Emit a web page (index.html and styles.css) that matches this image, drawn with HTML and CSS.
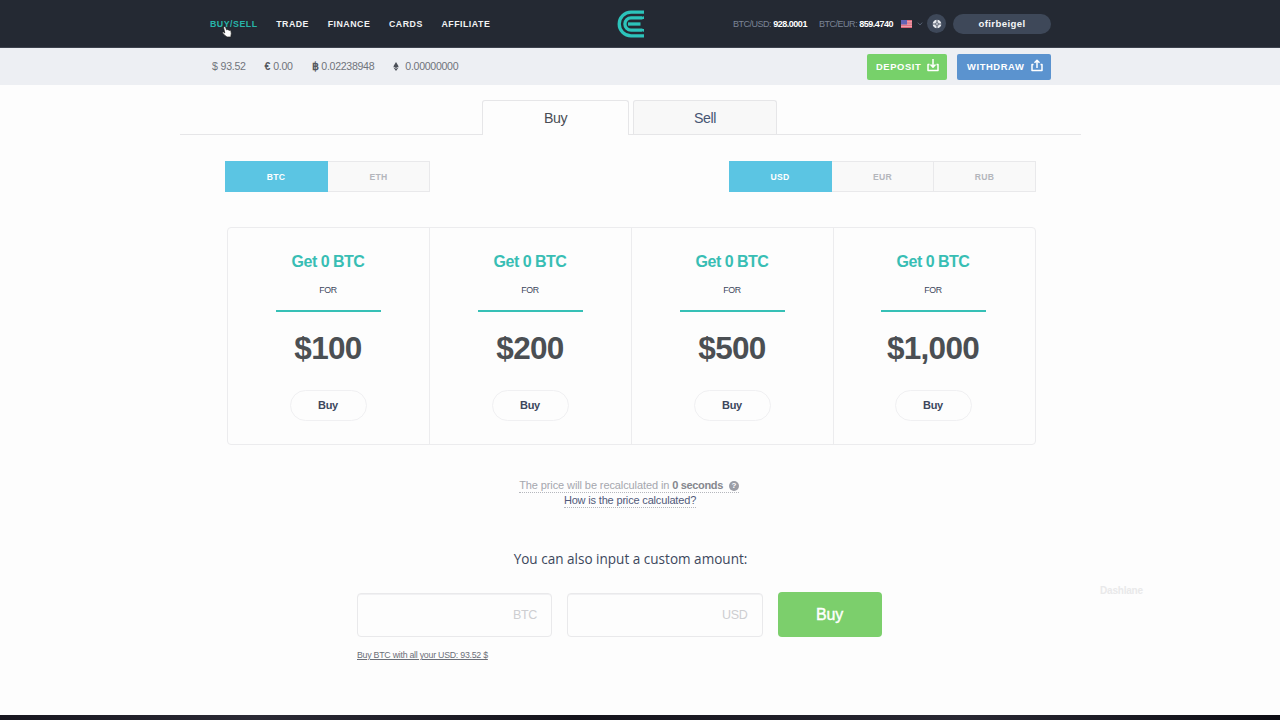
FILE: index.html
```html
<!DOCTYPE html>
<html lang="en">
<head>
    <meta charset="UTF-8">
    <meta name="viewport" content="width=device-width, initial-scale=1.0">
    <title>Buy Bitcoins</title>
    <link rel="stylesheet" href="styles.css">
</head>
<body>
    <!-- Top navigation -->
    <header class="topbar">
        <div class="container">
            <nav class="nav">
                <a class="active">BUY/SELL</a>
                <a>TRADE</a>
                <a>FINANCE</a>
                <a>CARDS</a>
                <a>AFFILIATE</a>
            </nav>
            <svg class="logo" width="28" height="28" viewBox="0 0 28 28" fill="none" stroke="#2cc4bb" stroke-width="3.3">
                <path d="M27 2.200H14a11.800 11.800 0 0 0 0 23.600h13"/>
                <path d="M25.500 7.900H14a6.100 6.100 0 0 0 0 12.200h11.500"/>
                <path d="M11 14h12.500"/>
                <path d="M22.500 9l4.500-3v3zM22.500 19l4.500 3v-3z" fill="#2cc4bb" stroke="none"/>
            </svg>
            <div class="account">
                <span class="rate">BTC/USD: <b>928.0001</b></span>
                <span class="rate">BTC/EUR: <b>859.4740</b></span>
                <svg class="flag" width="11" height="8" viewBox="0 0 11 8">
                    <rect width="11" height="8" fill="#eda0ab"/>
                    <path d="M0 .6h11M0 3h11M0 5.300h11M0 7.500h11" stroke="#dc6478" stroke-width="1"/>
                    <rect width="6" height="4.500" fill="#6263b5"/>
                </svg>
                <svg class="chevron" width="6" height="4" viewBox="0 0 6 4" fill="none" stroke="#566073"><path d="M.8.6L3 3 5.200.6"/></svg>
                <span class="help">
                    <svg width="10" height="10" viewBox="0 0 10 10" fill="none">
                        <circle cx="5" cy="5" r="3.100" stroke="#e9ebef" stroke-width="2.500"/>
                        <path d="M5 0v10M0 5h10" stroke="#3e4859" stroke-width=".9"/>
                        <path d="M5 3.500v3M3.500 5h3" stroke="#e9ebef" stroke-width=".8"/>
                    </svg>
                </span>
                <a class="user">ofirbeigel</a>
            </div>
        </div>
    </header>

    <!-- Balances -->
    <div class="balances">
        <div class="container">
            <span class="balance usd"><i>$</i>93.52</span>
            <span class="balance eur"><b>€</b>0.00</span>
            <span class="balance btc"><b>฿</b>0.02238948</span>
            <span class="balance eth">
                <svg width="6" height="9" viewBox="0 0 6 9" fill="#4c5058"><path d="M3 0l2.700 4.400L3 6 .3 4.400zM.3 5.200L3 6.800l2.700-1.600L3 9z"/></svg>0.00000000
            </span>
            <div class="actions">
                <a class="btn deposit">DEPOSIT
                    <svg width="12" height="13" viewBox="0 0 12 13" fill="none" stroke="#fff" stroke-width="1.500" stroke-linejoin="round"><path d="M2.500 5.500H1v6h10v-6H9.500M6 0v8M3.500 5.600L6 8.200l2.500-2.600"/></svg>
                </a>
                <a class="btn withdraw">WITHDRAW
                    <svg width="12" height="13" viewBox="0 0 12 13" fill="none" stroke="#fff" stroke-width="1.500" stroke-linejoin="round"><path d="M2.500 5.500H1v6h10v-6H9.500M6 9V1.200M3.500 3.800L6 1.200l2.500 2.600"/></svg>
                </a>
            </div>
        </div>
    </div>

    <main class="content">
        <div class="tabs">
            <a class="tab active">Buy</a>
            <a class="tab">Sell</a>
        </div>

        <div class="switches">
            <div class="switch">
                <a class="active">BTC</a>
                <a>ETH</a>
            </div>
            <div class="switch">
                <a class="active">USD</a>
                <a>EUR</a>
                <a>RUB</a>
            </div>
        </div>

        <!-- Fixed packages -->
        <div class="packages">
            <div class="package">
                <h3>Get 0 BTC</h3>
                <span class="for">FOR</span>
                <div class="price">$100</div>
                <a class="buy">Buy</a>
            </div>
            <div class="package">
                <h3>Get 0 BTC</h3>
                <span class="for">FOR</span>
                <div class="price">$200</div>
                <a class="buy">Buy</a>
            </div>
            <div class="package">
                <h3>Get 0 BTC</h3>
                <span class="for">FOR</span>
                <div class="price">$500</div>
                <a class="buy">Buy</a>
            </div>
            <div class="package">
                <h3>Get 0 BTC</h3>
                <span class="for">FOR</span>
                <div class="price">$1,000</div>
                <a class="buy">Buy</a>
            </div>
        </div>

        <div class="notes">
            <span class="recalc">The price will be recalculated in <b>0 seconds</b> <span class="question">?</span></span>
            <a class="how">How is the price calculated?</a>
        </div>

        <!-- Custom amount -->
        <h2>You can also input a custom amount:</h2>
        <form class="custom">
            <label class="field">BTC</label>
            <label class="field">USD</label>
            <button type="button">Buy</button>
        </form>
        <a class="all">Buy BTC with all your USD: 93.52 $</a>
    </main>

    <footer class="strip"></footer>

    <span class="ghost">Dashlane</span>
    <svg class="cursor" width="10" height="12" viewBox="0 0 10 12" fill="#fff" stroke="#222" stroke-width=".7"><path d="M2.200.7c.8-.4 1.300.1 1.500.8l.8 2.300c.8-.5 1.300-.2 1.500.2.700-.3 1.200 0 1.400.4.900-.2 1.400.3 1.600 1.100.4 1.700.4 2.600-.1 4.200l.1 1.300H5L2.600 9.200.6 7c-.4-.8.6-1.300 1.300-.7l.9.700L1.700 2c-.1-.6 0-1 .5-1.300z"/></svg>
</body>
</html>
```
FILE: styles.css
```css
* {
    box-sizing: border-box;
}
body {
    margin: 0;
    height: 720px;
    overflow: hidden;
    display: flex;
    flex-direction: column;
    background-color: #fdfdfd;
    color: #3c475c;
    font-family: "Liberation Sans", Arial, sans-serif;
}
.container {
    width: 841px;
    height: 100%;
    margin: 0 0 0 210px;
    display: flex;
    align-items: center;
}
.topbar {
    flex: none;
    height: 48px;
    background-color: #242933;
    border-bottom: 1px solid #3d424e;
}
.nav {
    width: 407px;
    display: flex;
    gap: 18.7px;
    font-size: 8.8px;
    font-weight: bold;
    letter-spacing: 0.5px;
    color: #f1f2f4;
}
.nav .active {
    color: #27b5aa;
}
.account {
    margin-left: auto;
    display: flex;
    align-items: center;
}
.rate {
    margin-right: 12px;
    font-size: 9px;
    letter-spacing: -0.47px;
    color: #7b8496;
}
.rate b {
    color: #fff;
}
.rate + .flag {
    margin-left: -4px;
}
.chevron {
    margin: 0 4px 0 5px;
}
.help {
    width: 19px;
    height: 19px;
    border-radius: 50%;
    background-color: #3e4859;
    display: flex;
    align-items: center;
    justify-content: center;
}
.user {
    width: 98px;
    height: 20px;
    margin-left: 7px;
    border-radius: 10px;
    background-color: #3e4859;
    color: #f4f5f7;
    font-size: 9.6px;
    font-weight: bold;
    letter-spacing: 0.4px;
    line-height: 20px;
    text-align: center;
}

.balances {
    flex: none;
    height: 37px;
    background-color: #edeff3;
    color: #70747b;
}
.balance {
    display: flex;
    align-items: center;
    gap: 3px;
    font-size: 10.6px;
    line-height: 12px;
    letter-spacing: -0.3px;
}
.balances .balance {
    padding-bottom: 1px;
}
.balance i {
    font-style: normal;
}
.balance b {
    color: #55585f;
}
.usd {
    margin-left: 2px;
}
.eur {
    margin-left: 19px;
}
.btc {
    margin-left: 19px;
}
.eth {
    margin-left: 19px;
    gap: 6px;
}
.actions {
    margin-left: auto;
    display: flex;
    gap: 10px;
}
.btn {
    height: 26px;
    padding-bottom: 1px;
    border-radius: 2px;
    display: flex;
    align-items: center;
    justify-content: space-between;
    color: #fff;
    font-size: 9.4px;
    font-weight: bold;
    letter-spacing: 0.6px;
}
.deposit {
    width: 80px;
    padding-left: 9px;
    padding-right: 8px;
    background-color: #77d16a;
}
.withdraw {
    width: 94px;
    padding-left: 10px;
    padding-right: 8px;
    background-color: #5b93cf;
}
.btn svg {
    margin-bottom: 2px;
}

.content {
    flex: 1;
    width: 901px;
    margin-left: 180px;
}
.tabs {
    height: 50px;
    padding: 15px 0 0 302px;
    display: flex;
    gap: 4px;
    border-bottom: 1px solid #e6e6e8;
}
.tab {
    width: 144px;
    height: 34px;
    border: 1px solid #e6e6e8;
    border-bottom: none;
    border-radius: 3px 3px 0 0;
    background-color: #f8f8f8;
    color: #465573;
    font-size: 14.2px;
    letter-spacing: -0.4px;
    line-height: 34px;
    text-align: center;
}
.tab.active {
    width: 147px;
    height: 35px;
    background-color: #fdfdfd;
    color: #4a4d55;
}
.switches {
    margin: 26px 45px 0;
    display: flex;
    justify-content: space-between;
}
.switch {
    display: flex;
}
.switch a {
    width: 102px;
    height: 31px;
    border: 1px solid #e9e9eb;
    border-left: none;
    background-color: #f9f9f9;
    color: #b4b6bc;
    font-size: 8.6px;
    font-weight: bold;
    letter-spacing: 0.3px;
    line-height: 30px;
    text-align: center;
}
.switch .active {
    width: 103px;
    border-color: #5bc5e3;
    background-color: #5bc5e3;
    color: #fff;
}
.packages {
    width: 809px;
    height: 218px;
    margin: 35px 0 0 47px;
    display: grid;
    grid-template-columns: 202px 202px 202px 1fr;
    border: 1px solid #ececee;
    border-radius: 4px;
}
.package {
    padding: 24px 1px 0 0;
    display: flex;
    flex-direction: column;
    align-items: center;
    border-right: 1px solid #ececee;
}
.package:last-child {
    padding-right: 3px;
    border-right: none;
}
.package h3 {
    margin: 0;
    color: #38beb4;
    font-size: 16px;
    letter-spacing: -0.5px;
    line-height: 20px;
}
.for {
    width: 105px;
    height: 32px;
    margin-top: 8px;
    border-bottom: 2px solid #36c0b6;
    font-size: 8.8px;
    letter-spacing: -0.3px;
    line-height: 21px;
    text-align: center;
}
.price {
    margin-top: 18px;
    color: #4b4f53;
    font-size: 31.5px;
    font-weight: bold;
    letter-spacing: -0.7px;
    line-height: 36px;
}
.package .buy {
    width: 77px;
    height: 31px;
    margin-top: 24px;
    border: 1px solid #f0f0f2;
    border-radius: 16px;
    font-size: 11px;
    font-weight: bold;
    letter-spacing: -0.3px;
    line-height: 29px;
    text-align: center;
}
.notes {
    width: 220px;
    margin: 33px 0 0 339px;
    display: flex;
    flex-direction: column;
    align-items: center;
    font-size: 11px;
    letter-spacing: -0.1px;
    line-height: 14px;
    white-space: nowrap;
}
.recalc {
    border-bottom: 1px dotted #b5b7bd;
    color: #a5a7ae;
}
.recalc b {
    color: #85878e;
    letter-spacing: -0.35px;
}
.question {
    display: inline-block;
    width: 10px;
    height: 10px;
    margin-left: 3px;
    border-radius: 50%;
    background-color: #9b9da5;
    color: #fff;
    font-size: 8px;
    font-weight: bold;
    line-height: 10px;
    text-align: center;
    vertical-align: 1px;
}
.how {
    margin: 0 0 0 2px;
    border-bottom: 1px dotted #b5b7bd;
    color: #50597a;
    letter-spacing: -0.17px;
}
h2 {
    margin: 41px 0 0;
    font-family: "Open Sans", sans-serif;
    font-size: 13.55px;
    font-weight: normal;
    line-height: 20px;
    text-align: center;
}
.custom {
    margin: 23px 0 0 176.5px;
    display: flex;
    align-items: center;
    gap: 15px;
}
.field {
    width: 195.5px;
    height: 44px;
    padding-right: 14px;
    border: 1px solid #e9e9eb;
    border-radius: 4px;
    box-shadow: inset 0 1px 0 #f1f1f3;
    color: #cdced1;
    font-size: 12.5px;
    letter-spacing: -0.3px;
    line-height: 42px;
    text-align: right;
}
.custom button {
    width: 104px;
    height: 45px;
    padding: 0;
    border: none;
    border-radius: 4px;
    background-color: #7ccf6c;
    color: #fff;
    font-family: inherit;
    font-size: 16px;
    letter-spacing: -0.2px;
    -webkit-text-stroke: 0.4px #fff;
}
.all {
    display: block;
    margin: 12px 0 0 177px;
    color: #6b6f78;
    font-size: 8.8px;
    letter-spacing: -0.25px;
    line-height: 12px;
    text-decoration: underline;
}
.strip {
    flex: none;
    height: 5px;
    background: linear-gradient(90deg, #17161f, #2b2a35 20%, #14131b 45%, #292833 75%, #0d0d14);
}
.ghost {
    position: absolute;
    left: 1100px;
    top: 585px;
    color: #e9e9ea;
    font-size: 10px;
    font-weight: bold;
    letter-spacing: -0.2px;
}
.cursor {
    position: absolute;
    left: 222px;
    top: 26px;
}
```
